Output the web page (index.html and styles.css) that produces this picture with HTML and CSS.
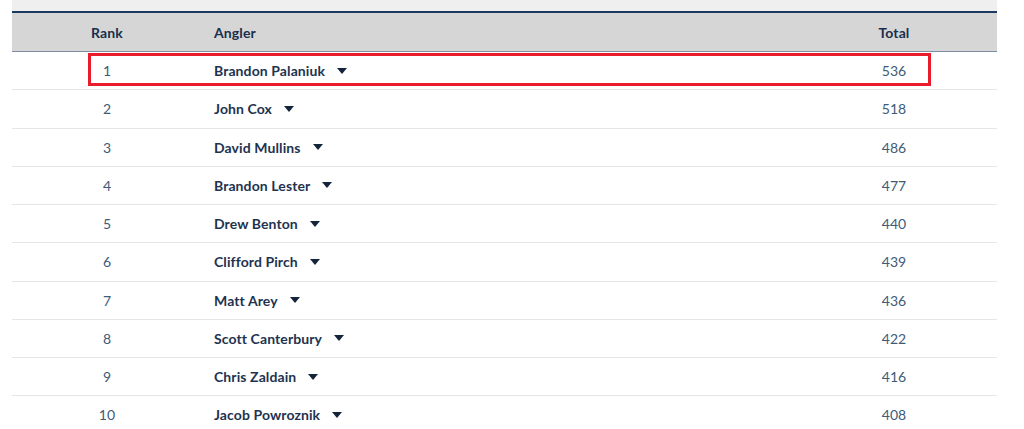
FILE: index.html
```html
<!DOCTYPE html>
<html>
<head>
<meta charset="utf-8">
<link rel="stylesheet" href="styles.css">
</head>
<body>
<div class="wrap">
  <div class="topband"></div>
  <div class="board">
    <div class="row head">
      <div class="c-rank">Rank</div>
      <div class="c-name">Angler</div>
      <div class="c-total">Total</div>
    </div>
    <div class="row"><div class="c-rank">1</div><div class="c-name">Brandon Palaniuk<span class="caret"></span></div><div class="c-total">536</div></div>
    <div class="row"><div class="c-rank">2</div><div class="c-name">John Cox<span class="caret"></span></div><div class="c-total">518</div></div>
    <div class="row"><div class="c-rank">3</div><div class="c-name">David Mullins<span class="caret"></span></div><div class="c-total">486</div></div>
    <div class="row"><div class="c-rank">4</div><div class="c-name">Brandon Lester<span class="caret"></span></div><div class="c-total">477</div></div>
    <div class="row"><div class="c-rank">5</div><div class="c-name">Drew Benton<span class="caret"></span></div><div class="c-total">440</div></div>
    <div class="row"><div class="c-rank">6</div><div class="c-name">Clifford Pirch<span class="caret"></span></div><div class="c-total">439</div></div>
    <div class="row"><div class="c-rank">7</div><div class="c-name">Matt Arey<span class="caret"></span></div><div class="c-total">436</div></div>
    <div class="row"><div class="c-rank">8</div><div class="c-name">Scott Canterbury<span class="caret"></span></div><div class="c-total">422</div></div>
    <div class="row"><div class="c-rank">9</div><div class="c-name">Chris Zaldain<span class="caret"></span></div><div class="c-total">416</div></div>
    <div class="row"><div class="c-rank">10</div><div class="c-name">Jacob Powroznik<span class="caret"></span></div><div class="c-total">408</div></div>
    <div class="highlight"></div>
  </div>
</div>
</body>
</html>
```
FILE: styles.css
```css
html, body {
  margin: 0;
  padding: 0;
  background: #ffffff;
  overflow: hidden;
}
body {
  font-family: "Lato", "Open Sans", sans-serif;
  font-size: 14px;
  letter-spacing: 0.1px;
  color: #1e3350;
}
.wrap {
  width: 985px;
  margin-left: 12px;
}
.topband {
  height: 11px;
  background: #efefef;
}
.board {
  position: relative;
  border-top: 2px solid #1c3a5e;
}
.row {
  display: flex;
  align-items: center;
  height: 37.25px;
  border-bottom: 1px solid #e6e6e6;
}
.row.head {
  height: 38px;
  background: #d6d6d6;
  border-bottom: 1px solid #7d8ea1;
  font-weight: 700;
  color: #1a2f4b;
}
.c-rank {
  width: 190px;
  text-align: center;
}
.c-name {
  flex: 1;
  padding-left: 12px;
  display: flex;
  align-items: center;
}
.c-total {
  width: 206px;
  text-align: center;
}
.row:not(.head) .c-rank,
.row:not(.head) .c-total {
  color: #3e5b77;
}
.row:not(.head) .c-name {
  font-weight: 700;
  color: #1e3350;
}
.caret {
  display: inline-block;
  width: 0;
  height: 0;
  margin-left: 12px;
  border-left: 5px solid transparent;
  border-right: 5px solid transparent;
  border-top: 6px solid #14243a;
}
.highlight {
  position: absolute;
  left: 76px;
  top: 40px;
  width: 837px;
  height: 27px;
  border: 3px solid #ea1c2b;
}
```
